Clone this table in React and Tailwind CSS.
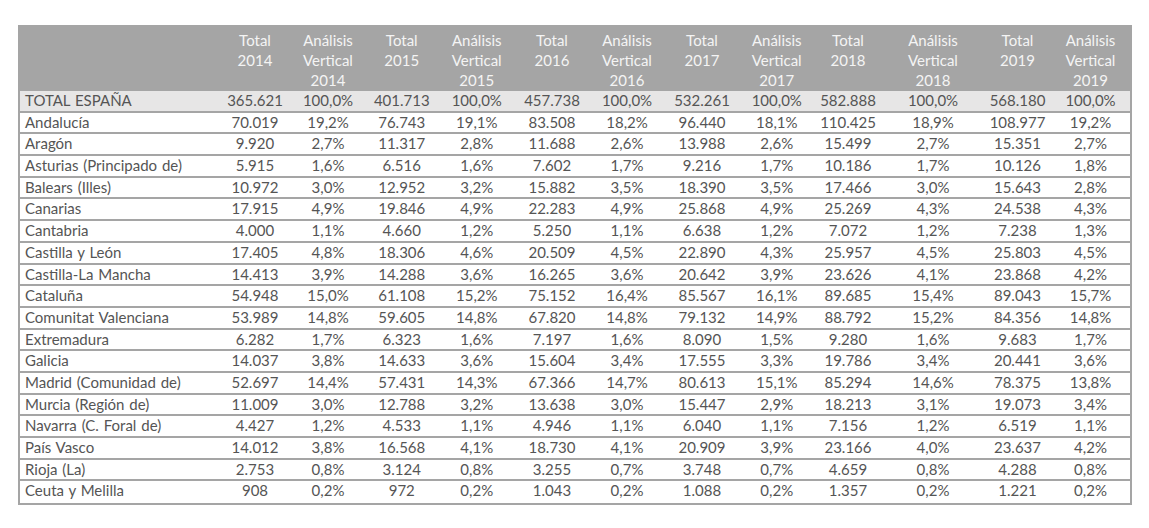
import React from "react";

const years = ["2014", "2015", "2016", "2017", "2018", "2019"];

const rows = [
  ["TOTAL ESPAÑA", "365.621", "100,0%", "401.713", "100,0%", "457.738", "100,0%", "532.261", "100,0%", "582.888", "100,0%", "568.180", "100,0%"],
  ["Andalucía", "70.019", "19,2%", "76.743", "19,1%", "83.508", "18,2%", "96.440", "18,1%", "110.425", "18,9%", "108.977", "19,2%"],
  ["Aragón", "9.920", "2,7%", "11.317", "2,8%", "11.688", "2,6%", "13.988", "2,6%", "15.499", "2,7%", "15.351", "2,7%"],
  ["Asturias (Principado de)", "5.915", "1,6%", "6.516", "1,6%", "7.602", "1,7%", "9.216", "1,7%", "10.186", "1,7%", "10.126", "1,8%"],
  ["Balears (Illes)", "10.972", "3,0%", "12.952", "3,2%", "15.882", "3,5%", "18.390", "3,5%", "17.466", "3,0%", "15.643", "2,8%"],
  ["Canarias", "17.915", "4,9%", "19.846", "4,9%", "22.283", "4,9%", "25.868", "4,9%", "25.269", "4,3%", "24.538", "4,3%"],
  ["Cantabria", "4.000", "1,1%", "4.660", "1,2%", "5.250", "1,1%", "6.638", "1,2%", "7.072", "1,2%", "7.238", "1,3%"],
  ["Castilla y León", "17.405", "4,8%", "18.306", "4,6%", "20.509", "4,5%", "22.890", "4,3%", "25.957", "4,5%", "25.803", "4,5%"],
  ["Castilla-La Mancha", "14.413", "3,9%", "14.288", "3,6%", "16.265", "3,6%", "20.642", "3,9%", "23.626", "4,1%", "23.868", "4,2%"],
  ["Cataluña", "54.948", "15,0%", "61.108", "15,2%", "75.152", "16,4%", "85.567", "16,1%", "89.685", "15,4%", "89.043", "15,7%"],
  ["Comunitat Valenciana", "53.989", "14,8%", "59.605", "14,8%", "67.820", "14,8%", "79.132", "14,9%", "88.792", "15,2%", "84.356", "14,8%"],
  ["Extremadura", "6.282", "1,7%", "6.323", "1,6%", "7.197", "1,6%", "8.090", "1,5%", "9.280", "1,6%", "9.683", "1,7%"],
  ["Galicia", "14.037", "3,8%", "14.633", "3,6%", "15.604", "3,4%", "17.555", "3,3%", "19.786", "3,4%", "20.441", "3,6%"],
  ["Madrid (Comunidad de)", "52.697", "14,4%", "57.431", "14,3%", "67.366", "14,7%", "80.613", "15,1%", "85.294", "14,6%", "78.375", "13,8%"],
  ["Murcia (Región de)", "11.009", "3,0%", "12.788", "3,2%", "13.638", "3,0%", "15.447", "2,9%", "18.213", "3,1%", "19.073", "3,4%"],
  ["Navarra (C. Foral de)", "4.427", "1,2%", "4.533", "1,1%", "4.946", "1,1%", "6.040", "1,1%", "7.156", "1,2%", "6.519", "1,1%"],
  ["País Vasco", "14.012", "3,8%", "16.568", "4,1%", "18.730", "4,1%", "20.909", "3,9%", "23.166", "4,0%", "23.637", "4,2%"],
  ["Rioja (La)", "2.753", "0,8%", "3.124", "0,8%", "3.255", "0,7%", "3.748", "0,7%", "4.659", "0,8%", "4.288", "0,8%"],
  ["Ceuta y Melilla", "908", "0,2%", "972", "0,2%", "1.043", "0,2%", "1.088", "0,2%", "1.357", "0,2%", "1.221", "0,2%"],
];

// column widths tuned so every value sits centred like the sheet export
const cols =
  "grid grid-cols-[198.5px_73px_73px_74.5px_75.5px_75px_75px_75px_74.5px_68px_102px_67px_79px]";

export default function App() {
  return (
    <div
      className="min-h-[528px] bg-white pt-[25px] pl-[18px] font-normal text-[15px] text-[#555555]"
      style={{ fontFamily: "Lato, 'Open Sans', sans-serif" }}
    >
      <div className="w-[1114px] border-x-2 border-b-2 border-[#a5a5a5]">
        {/* Header */}
        <div className={`${cols} h-[66px] bg-[#a5a5a5] text-[#f4f4f4] leading-[20px] pt-[5px]`}>
          <div />
          {years.map((y) => (
            <React.Fragment key={y}>
              <div className="flex flex-col items-center">
                <span>Total</span>
                <span>{y}</span>
              </div>
              <div className="flex flex-col items-center">
                <span>Análisis</span>
                <span>Vertical</span>
                <span>{y}</span>
              </div>
            </React.Fragment>
          ))}
        </div>

        {/* Body */}
        {rows.map((r, i) => (
          <div
            key={r[0]}
            className={`${cols} h-[21.7px] leading-[19.7px] whitespace-nowrap ${
              i < rows.length - 1 ? "border-b-2 border-[#a5a5a5]" : ""
            } ${i === 0 ? "bg-[#e7e6e6]" : "bg-white"}`}
          >
            <div className="pl-[5px] [word-spacing:1px]">{r[0]}</div>
            {r.slice(1).map((v, j) => (
              <div key={j} className="text-center">
                {v}
              </div>
            ))}
          </div>
        ))}
      </div>
    </div>
  );
}
